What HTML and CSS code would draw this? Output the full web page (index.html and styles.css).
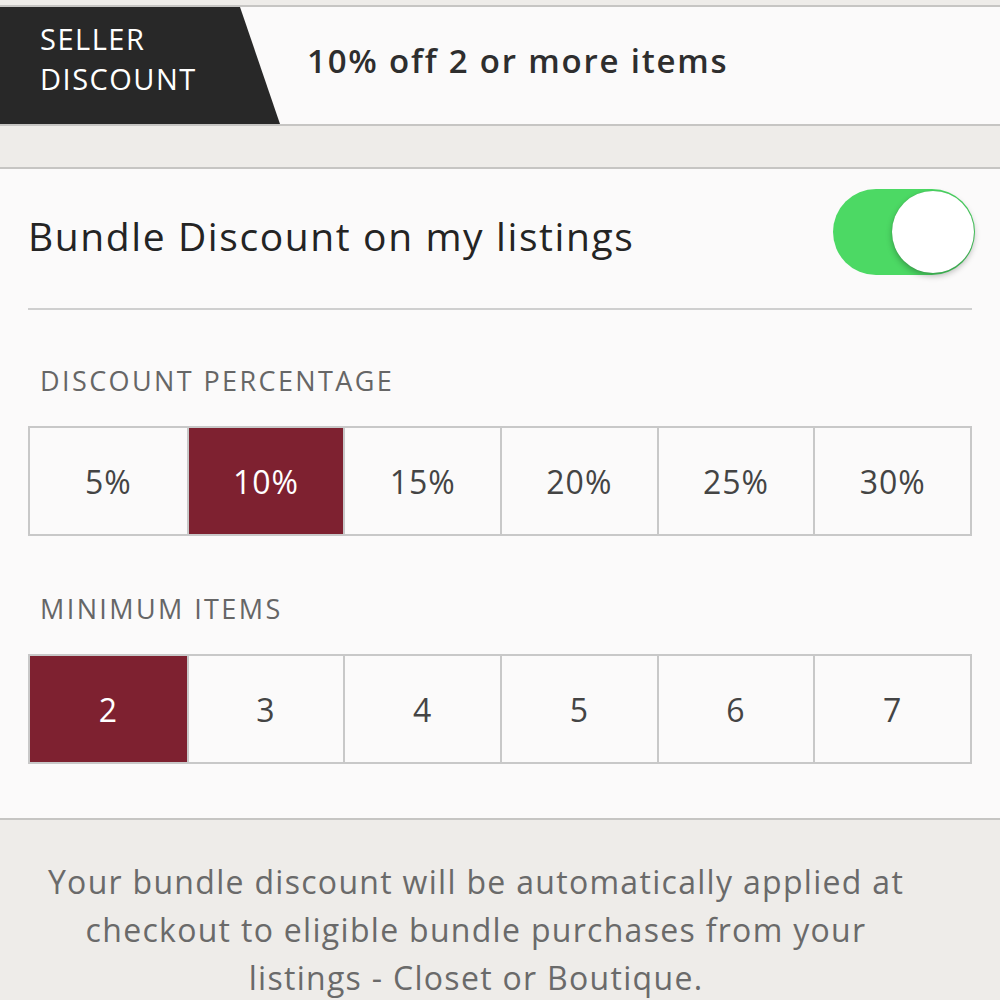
FILE: index.html
```html
<!DOCTYPE html>
<html>
<head>
<meta charset="utf-8">
<link rel="stylesheet" href="styles.css">
</head>
<body>
<div class="page">
  <div class="topgap"></div>
  <header class="banner">
    <div class="tag"><span>SELLER<br>DISCOUNT</span></div>
    <div class="summary">10% off 2 or more items</div>
  </header>
  <div class="gap"></div>
  <section class="card">
    <div class="toggle-row">
      <div class="toggle-label">Bundle Discount on my listings</div>
      <div class="switch"><div class="knob"></div></div>
    </div>
    <div class="divider"></div>
    <div class="label">DISCOUNT PERCENTAGE</div>
    <div class="options">
      <div class="opt">5%</div>
      <div class="opt sel">10%</div>
      <div class="opt">15%</div>
      <div class="opt">20%</div>
      <div class="opt">25%</div>
      <div class="opt">30%</div>
    </div>
    <div class="label">MINIMUM ITEMS</div>
    <div class="options">
      <div class="opt sel">2</div>
      <div class="opt">3</div>
      <div class="opt">4</div>
      <div class="opt">5</div>
      <div class="opt">6</div>
      <div class="opt">7</div>
    </div>
  </section>
  <footer class="note">Your bundle discount will be automatically applied at checkout to eligible bundle purchases from your listings - Closet or Boutique.</footer>
</div>
</body>
</html>
```

FILE: styles.css
```css
html, body {
  margin: 0;
  padding: 0;
  background: #eeece9;
}
body {
  font-family: "Open Sans", "Lato", sans-serif;
  width: 1000px;
  height: 1000px;
  overflow: hidden;
}
.page {
  display: flex;
  flex-direction: column;
}
.topgap {
  height: 5px;
}
.banner {
  display: flex;
  background: #fbfafa;
  border-top: 2px solid #c6c5c3;
  border-bottom: 2px solid #c6c5c3;
  box-sizing: border-box;
  height: 121px;
}
.tag {
  width: 280px;
  flex: none;
  background: #282828;
  clip-path: polygon(0 0, 240px 0, 280px 100%, 0 100%);
  color: #ffffff;
  font-size: 29px;
  letter-spacing: 1.5px;
  line-height: 40px;
  display: flex;
  align-items: center;
  padding-left: 40px;
  padding-bottom: 14px;
  box-sizing: border-box;
}
.summary {
  display: flex;
  align-items: center;
  padding-left: 27px;
  padding-bottom: 10px;
  font-size: 33px;
  letter-spacing: 1.8px;
  font-weight: 600;
  color: #2e2e2e;
}
.gap {
  height: 41px;
}
.card {
  background: #fbfafa;
  border-top: 2px solid #c6c5c3;
  border-bottom: 2px solid #c6c5c3;
  padding: 0 28px 54px 28px;
  display: flex;
  flex-direction: column;
}
.toggle-row {
  display: flex;
  align-items: flex-start;
  justify-content: space-between;
  height: 139px;
  box-sizing: border-box;
  padding-top: 20px;
}
.toggle-label {
  font-size: 39px;
  letter-spacing: 1.6px;
  line-height: 52px;
  margin-top: 21px;
  color: #242424;
}
.switch {
  width: 142px;
  height: 86px;
  border-radius: 43px;
  background: #4cd964;
  position: relative;
  margin-right: -3px;
}
.knob {
  position: absolute;
  right: 1px;
  top: 2px;
  width: 82px;
  height: 82px;
  border-radius: 50%;
  background: #ffffff;
  box-shadow: 0 3px 6px rgba(0,0,0,0.28), 0 0 1px rgba(0,0,0,0.2);
}
.divider {
  height: 2px;
  background: #cfcfcf;
}
.label {
  font-size: 27px;
  letter-spacing: 2.4px;
  line-height: 30px;
  color: #666666;
  padding-left: 12px;
  padding-bottom: 30px;
  height: 116px;
  box-sizing: border-box;
  display: flex;
  align-items: flex-end;
}
.options + .label {
  height: 118px;
}
.options {
  display: grid;
  grid-template-columns: repeat(6, 1fr);
  border: 2px solid #c8c8c8;
  height: 110px;
  box-sizing: border-box;
}
.opt {
  display: flex;
  align-items: center;
  justify-content: center;
  font-size: 32px;
  letter-spacing: 1px;
  color: #444444;
  border-left: 2px solid #c8c8c8;
  background: #fbfafa;
}
.opt:first-child {
  border-left: none;
}
.opt.sel {
  background: #7e2130;
  color: #ffffff;
}
.note {
  text-align: center;
  font-size: 32px;
  letter-spacing: 1.3px;
  line-height: 48px;
  color: #6a6a6a;
  padding: 38px 89px 0 41px;
}
```
